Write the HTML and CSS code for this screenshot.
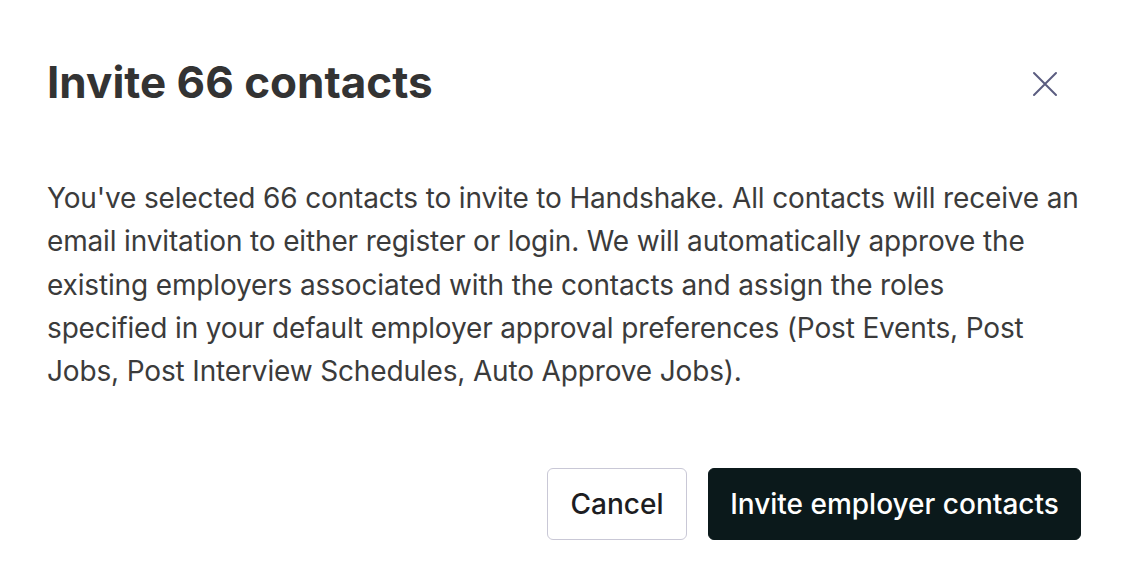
FILE: index.html
```html
<!DOCTYPE html>
<html>
<head>
<meta charset="utf-8">
<link rel="stylesheet" href="styles.css">
</head>
<body>
<div class="modal">
  <div class="header">
    <h1 class="title">Invite 66 contacts</h1>
    <button class="close" aria-label="Close">
      <svg width="26" height="26" viewBox="0 0 26 26"><path d="M2 2 L24 24 M24 2 L2 24" stroke="#5b5d80" stroke-width="2" stroke-linecap="round" fill="none"/></svg>
    </button>
  </div>
  <p class="body">You've selected 66 contacts to invite to Handshake. All contacts will receive an<br> email invitation to either register or login. We will automatically approve the<br> existing employers associated with the contacts and assign the roles<br> specified in your default employer approval preferences (Post Events, Post<br> Jobs, Post Interview Schedules, Auto Approve Jobs).</p>
  <div class="actions">
    <button class="btn secondary">Cancel</button>
    <button class="btn primary">Invite employer contacts</button>
  </div>
</div>
</body>
</html>
```

FILE: styles.css
```css
html, body {
  margin: 0;
  padding: 0;
  background: #ffffff;
}
body {
  font-family: Inter, "Noto Sans", sans-serif;
}
.modal {
  padding: 56px 45px 0 47px;
}
.header {
  display: flex;
  align-items: center;
  justify-content: space-between;
  height: 53px;
}
.title {
  margin: 0;
  font-size: 44px;
  line-height: 53px;
  font-weight: 700;
  color: #333333;
  letter-spacing: 0;
}
.close {
  background: none;
  border: none;
  padding: 0;
  margin-right: 23px;
  margin-top: 3px;
  width: 26px;
  height: 26px;
  display: flex;
}
.body {
  margin: 68px -10px 0 0;
  font-size: 28px;
  line-height: 43.3px;
  color: #3b3b3b;
  letter-spacing: -0.15px;
}
.actions {
  display: flex;
  justify-content: flex-end;
  gap: 21px;
  margin-top: 75px;
}
.btn {
  font-family: Inter, "Noto Sans", sans-serif;
  font-size: 28px;
  font-weight: 500;
  height: 72px;
  border-radius: 6px;
  padding: 0 20px;
}
.secondary {
  background: #ffffff;
  border: 1px solid #c9c8d6;
  color: #1d1d22;
  width: 140px;
}
.primary {
  background: #0b191b;
  border: 1px solid #0b191b;
  color: #ffffff;
  width: 373px;
}
```
